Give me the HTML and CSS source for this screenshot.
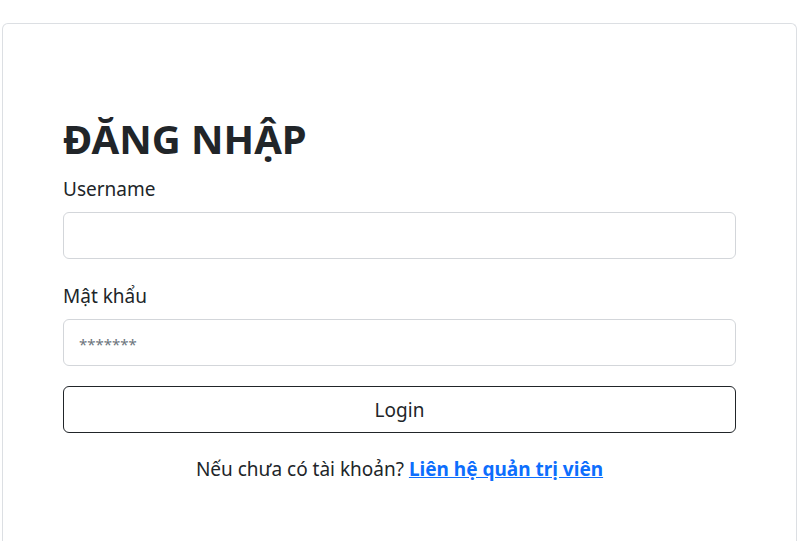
FILE: index.html
```html
<!DOCTYPE html>
<html lang="vi">
<head>
<meta charset="utf-8">
<title>Đăng nhập</title>
<link rel="stylesheet" href="styles.css">
</head>
<body>
<div class="page">
  <div class="card">
    <h1 class="title">ĐĂNG NHẬP</h1>
    <form class="form">
      <label class="label" for="u">Username</label>
      <input class="input" id="u" type="text">
      <label class="label label-pw" for="p">Mật khẩu</label>
      <input class="input" id="p" type="password" placeholder="*******">
      <button class="btn" type="button">Login</button>
    </form>
    <p class="foot">Nếu chưa có tài khoản? <a class="link" href="#">Liên hệ quản trị viên</a></p>
  </div>
</div>
</body>
</html>
```
FILE: styles.css
```css
html, body {
  margin: 0;
  padding: 0;
  background: #fff;
}
body {
  font-family: "Noto Sans", "Open Sans", sans-serif;
  color: #212529;
}
.page {
  padding: 23px 0 0 2px;
  width: 795px;
}
.card {
  border: 1px solid #dcdfe3;
  border-bottom: none;
  border-radius: 6px 6px 0 0;
  padding: 90px 60px 40px 60px;
  height: 520px;
  box-sizing: border-box;
}
.title {
  margin: 0;
  font-size: 40px;
  font-weight: 700;
  line-height: 50px;
}
.form {
  display: flex;
  flex-direction: column;
}
.label {
  font-size: 19px;
  line-height: 30px;
  margin-top: 10px;
  margin-bottom: 8px;
}
.label-pw {
  margin-top: 22px;
}
.input {
  height: 47px;
  box-sizing: border-box;
  border: 1px solid #d3d6da;
  border-radius: 6px;
  padding: 0 15px;
  font-family: inherit;
  font-size: 19px;
  color: #212529;
  outline: none;
  margin: 0;
}
.input::placeholder {
  color: #6c757d;
  font-size: 15px;
}
.btn {
  margin-top: 20px;
  height: 47px;
  border: 1px solid #212529;
  border-radius: 6px;
  background: #fff;
  font-family: inherit;
  font-size: 19px;
  color: #212529;
}
.foot {
  margin: 22px 0 0 0;
  text-align: center;
  font-size: 19px;
  line-height: 28px;
}
.link {
  color: #0d6efd;
  font-weight: 700;
  text-decoration: underline;
}
```
